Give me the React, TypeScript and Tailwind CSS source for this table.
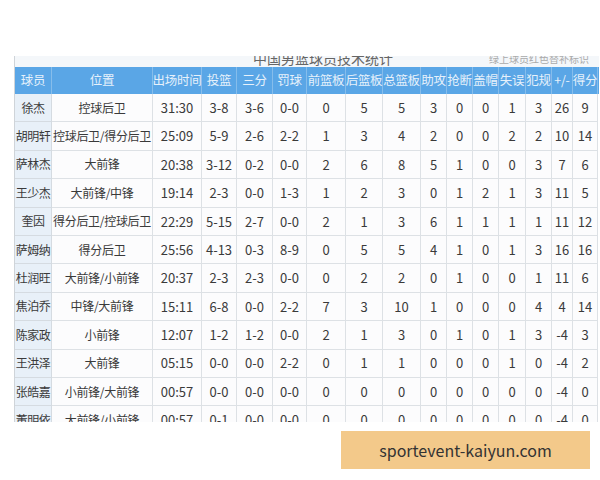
import React from "react";

const rows: string[][] = [
	["徐杰", "控球后卫", "31:30", "3-8", "3-6", "0-0", "0", "5", "5", "3", "0", "0", "1", "3", "26", "9"],
	["胡明轩", "控球后卫/得分后卫", "25:09", "5-9", "2-6", "2-2", "1", "3", "4", "2", "0", "0", "2", "2", "10", "14"],
	["萨林杰", "大前锋", "20:38", "3-12", "0-2", "0-0", "2", "6", "8", "5", "1", "0", "0", "3", "7", "6"],
	["王少杰", "大前锋/中锋", "19:14", "2-3", "0-0", "1-3", "1", "2", "3", "0", "1", "2", "1", "3", "11", "5"],
	["奎因", "得分后卫/控球后卫", "22:29", "5-15", "2-7", "0-0", "2", "1", "3", "6", "1", "1", "1", "1", "11", "12"],
	["萨姆纳", "得分后卫", "25:56", "4-13", "0-3", "8-9", "0", "5", "5", "4", "1", "0", "1", "3", "16", "16"],
	["杜润旺", "大前锋/小前锋", "20:37", "2-3", "2-3", "0-0", "0", "2", "2", "0", "1", "0", "0", "1", "11", "6"],
	["焦泊乔", "中锋/大前锋", "15:11", "6-8", "0-0", "2-2", "7", "3", "10", "1", "0", "0", "0", "4", "4", "14"],
	["陈家政", "小前锋", "12:07", "1-2", "1-2", "0-0", "2", "1", "3", "0", "1", "0", "1", "3", "-4", "3"],
	["王洪泽", "大前锋", "05:15", "0-0", "0-0", "2-2", "0", "1", "1", "0", "0", "0", "1", "0", "-4", "2"],
	["张皓嘉", "小前锋/大前锋", "00:57", "0-0", "0-0", "0-0", "0", "0", "0", "0", "0", "0", "0", "0", "-4", "0"],
	["董明依", "大前锋/小前锋", "00:57", "0-1", "0-0", "0-0", "0", "0", "0", "0", "0", "0", "0", "0", "-4", "0"],
];

const headers = ["球员", "位置", "出场时间", "投篮", "三分", "罚球", "前篮板", "后篮板", "总篮板", "助攻", "抢断", "盖帽", "失误", "犯规", "+/-", "得分"];

const cols = "grid grid-cols-[37px_101px_49px_35px_36px_34px_39px_37px_38px_26px_26px_26px_27px_26px_21px_25px]";

export default function App() {
	return (
		<div className="w-[600px] h-[480px] bg-white overflow-hidden" style={{ fontFamily: '"Noto Sans CJK SC", "Noto Sans", sans-serif' }}>
			<div className="pt-[56px] pl-[14px]">
				<div className="w-[585px] h-[366px] overflow-hidden border-l border-[#cfd4d9]">
					{/* title strip, top half cut off in the photo */}
					<div className="h-[11px] bg-[#f4f7fa] flex items-end justify-between overflow-hidden pl-[238px] pr-[10px]">
						<div className="text-[14px] leading-[16px] text-[#666] mb-[1px]">中国男篮球员技术统计</div>
						<div className="text-[10px] leading-[12px] text-[#aaa] mb-[2px]">绿上球员红色替补标识</div>
					</div>
					<div className={`${cols} h-[27px] bg-[#5aa6e6] text-[#e6f1fb] text-[12.5px]`}>
						{headers.map((h, i) => (
							<div key={i} className="flex items-center justify-center border-r border-[#86bdeb] whitespace-nowrap tracking-[-0.3px]">
								{h}
							</div>
						))}
					</div>
					{rows.map((r, ri) => (
						<div key={ri} className={`${cols} h-[28.4px] text-[#3a3a3a]`}>
							{r.map((c, ci) => (
								<div
									key={ci}
									className={
										ci === 0
											? "flex items-center justify-center bg-[#e8f0f8] border-r border-b border-[#d5dbe1] text-[12px] whitespace-nowrap tracking-[-0.5px]"
											: ci === 1
											? "flex items-center justify-center bg-[#fcfcfd] border-r border-b border-[#dde1e5] text-[12px] whitespace-nowrap tracking-[-0.3px]"
											: "flex items-center justify-center bg-[#fcfcfd] border-r border-b border-[#dde1e5] text-[13px] whitespace-nowrap"
									}
								>
									{c}
								</div>
							))}
						</div>
					))}
				</div>
			</div>
			<div className="pt-[9px] pl-[341px]">
				<div className="w-[249px] h-[38px] bg-[#f3c98a] flex items-center justify-center text-[16px] text-[#333]">
					sportevent-kaiyun.com
				</div>
			</div>
		</div>
	);
}
